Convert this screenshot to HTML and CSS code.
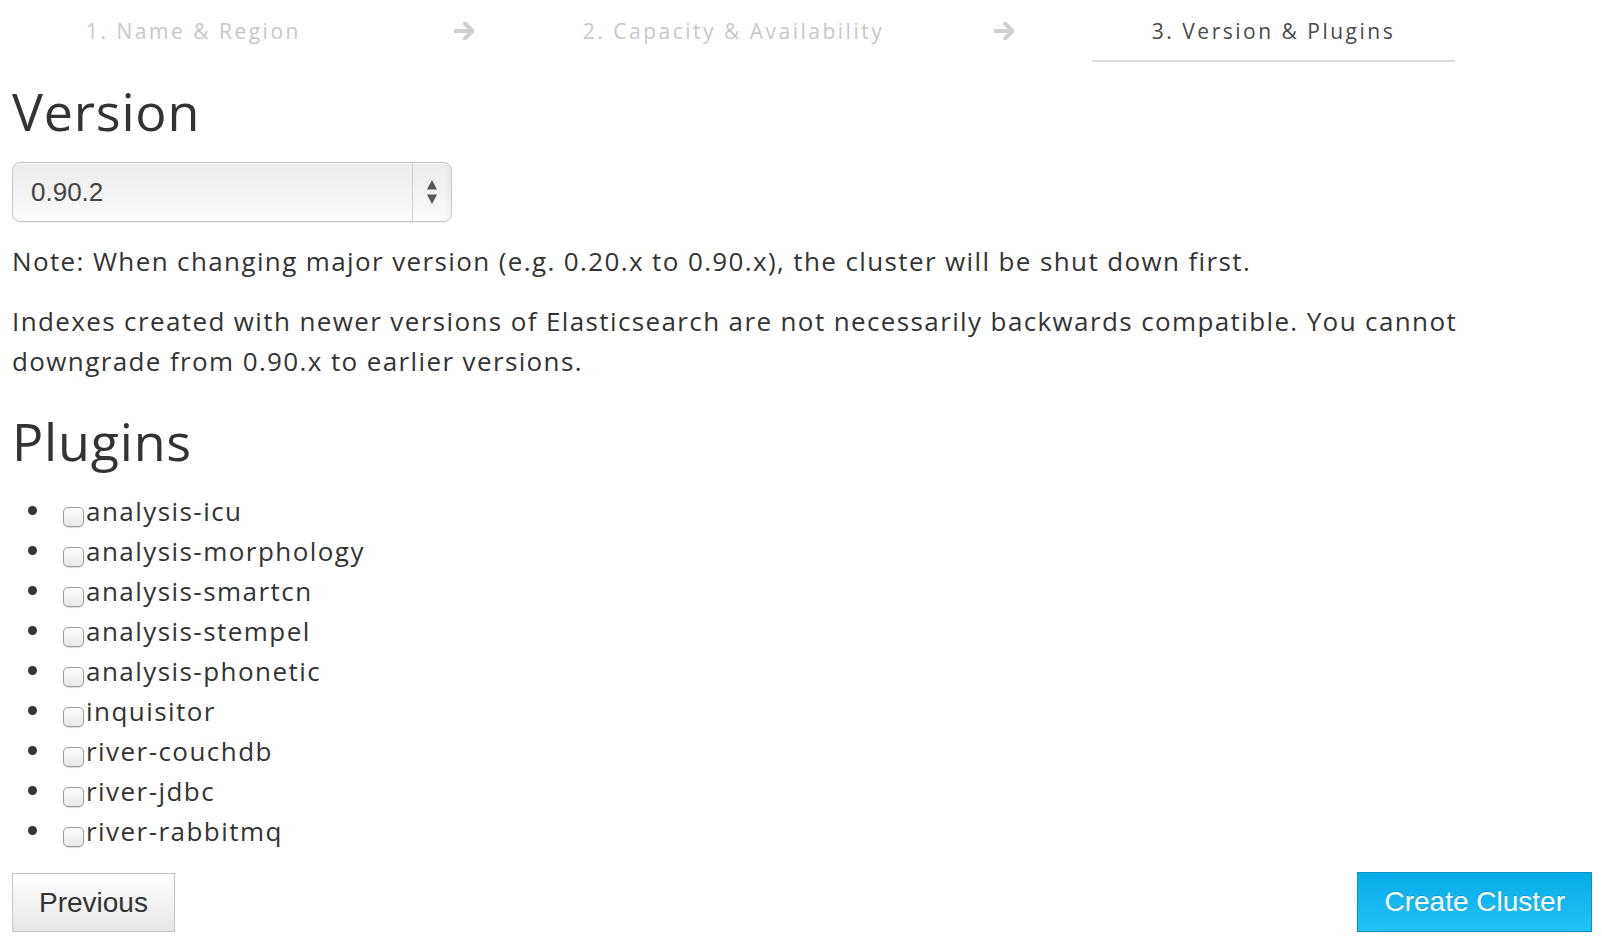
FILE: index.html
```html
<!DOCTYPE html>
<html>
<head>
<meta charset="utf-8">
<link rel="stylesheet" href="styles.css">
</head>
<body>
<div class="steps">
  <div class="step">1. Name &amp; Region</div>
  <div class="step-arrow"><svg width="20" height="18" viewBox="0 0 20 18"><path d="M11 1.5 L18.5 9 L11 16.5 M18 9 H1.5" fill="none" stroke="#d0d0d0" stroke-width="4" stroke-linecap="round" stroke-linejoin="round"/></svg></div>
  <div class="step">2. Capacity &amp; Availability</div>
  <div class="step-arrow"><svg width="20" height="18" viewBox="0 0 20 18"><path d="M11 1.5 L18.5 9 L11 16.5 M18 9 H1.5" fill="none" stroke="#d0d0d0" stroke-width="4" stroke-linecap="round" stroke-linejoin="round"/></svg></div>
  <div class="step active">3. Version &amp; Plugins</div>
</div>

<h1 class="title">Version</h1>
<div class="select">
  <span class="select-value">0.90.2</span>
  <span class="select-arrows"><svg width="14" height="28" viewBox="0 0 14 28"><path d="M7 2 L12 11.5 H2 Z M7 26 L12 16.5 H2 Z" fill="#555"/></svg></span>
</div>
<p class="text note">Note: When changing major version (e.g. 0.20.x to 0.90.x), the cluster will be shut down first.</p>
<p class="text">Indexes created with newer versions of Elasticsearch are not necessarily backwards compatible. You cannot downgrade from 0.90.x to earlier versions.</p>

<h2 class="title plugins">Plugins</h2>
<ul class="plugin-list">
  <li><input type="checkbox" class="cb">analysis-icu</li>
  <li><input type="checkbox" class="cb">analysis-morphology</li>
  <li><input type="checkbox" class="cb">analysis-smartcn</li>
  <li><input type="checkbox" class="cb">analysis-stempel</li>
  <li><input type="checkbox" class="cb">analysis-phonetic</li>
  <li><input type="checkbox" class="cb">inquisitor</li>
  <li><input type="checkbox" class="cb">river-couchdb</li>
  <li><input type="checkbox" class="cb">river-jdbc</li>
  <li><input type="checkbox" class="cb">river-rabbitmq</li>
</ul>

<div class="actions">
  <button class="btn">Previous</button>
  <button class="btn primary">Create Cluster</button>
</div>
</body>
</html>
```
FILE: styles.css
```css
html, body {
  margin: 0;
  padding: 0;
  background: #fff;
}
body {
  padding: 0 10px 0 12px;
  font-family: "Open Sans", "Noto Sans", sans-serif;
  color: #333;
}
.steps {
  display: flex;
  align-items: flex-start;
  height: 62px;
}
.step {
  width: 363px;
  flex: none;
  text-align: center;
  font-size: 21px;
  letter-spacing: 2.5px;
  line-height: 28px;
  padding: 17px 0 15px;
  color: #c8c8c8;
  white-space: nowrap;
}
.step.active {
  color: #4a4a4a;
  border-bottom: 2px solid #dcdcdc;
}
.step-arrow {
  width: 177px;
  flex: none;
  display: flex;
  justify-content: center;
  padding-top: 22px;
}
.title {
  font-size: 52px;
  font-weight: 400;
  line-height: 62px;
  letter-spacing: 0.8px;
  margin: 18px 0 0;
  color: #333;
}
.select {
  margin-top: 20px;
  width: 440px;
  height: 60px;
  box-sizing: border-box;
  border: 1px solid #c6c6c6;
  border-radius: 8px;
  background: linear-gradient(#ececec, #f3f3f3 60%, #fdfdfd);
  box-shadow: inset 0 1px 0 #f8f8f8, inset -6px 0 6px -4px rgba(0,0,0,0.04), 0 1px 1px rgba(0,0,0,0.05);
  display: flex;
  align-items: stretch;
}
.select-value {
  flex: 1;
  display: flex;
  align-items: center;
  padding-left: 18px;
  font-family: "Liberation Sans", Arial, sans-serif;
  font-size: 26px;
  color: #444;
  border-right: 1px solid #cfcfcf;
}
.select-arrows {
  width: 38px;
  display: flex;
  align-items: center;
  justify-content: center;
}
.text {
  font-size: 26px;
  line-height: 40px;
  letter-spacing: 1.38px;
  margin: 20px 0 0;
  color: #333;
}
.text.note {
  margin-top: 19px;
}
.plugins {
  margin-top: 29px;
}
.plugin-list {
  list-style: none;
  margin: 19px 0 0;
  padding: 0;
  font-size: 26px;
  line-height: 40px;
  letter-spacing: 1.45px;
  color: #333;
}
.plugin-list li::before {
  content: "";
  display: inline-block;
  width: 9px;
  height: 9px;
  border-radius: 50%;
  background: #333;
  margin: 0 26px 0 16px;
  vertical-align: 6px;
}
.cb {
  -webkit-appearance: none;
  appearance: none;
  width: 21px;
  height: 20px;
  margin: 0 2px 0 0;
  box-sizing: border-box;
  border: 1px solid #9c9c9c;
  border-radius: 5px;
  background: linear-gradient(#fdfdfd, #e9e9e9);
  box-shadow: 0 1px 1px rgba(0,0,0,0.15);
  vertical-align: -6px;
}
.actions {
  display: flex;
  justify-content: space-between;
  align-items: flex-end;
  margin-top: 21px;
}
.btn {
  font-family: "Liberation Sans", Arial, sans-serif;
  font-size: 28px;
  height: 59px;
  padding: 0 26px;
  border: 1px solid #c4c4c4;
  background: linear-gradient(#ffffff, #e6e6e6);
  color: #333;
  border-radius: 0;
}
.btn.primary {
  height: 60px;
  padding: 0 26px;
  color: #fff;
  border: 1px solid #0b93cc;
  border-bottom-color: #0a85ba;
  background: linear-gradient(#07abe6, #22c2fc);
  text-shadow: 0 -1px 0 rgba(0,0,0,0.15);
}
```
